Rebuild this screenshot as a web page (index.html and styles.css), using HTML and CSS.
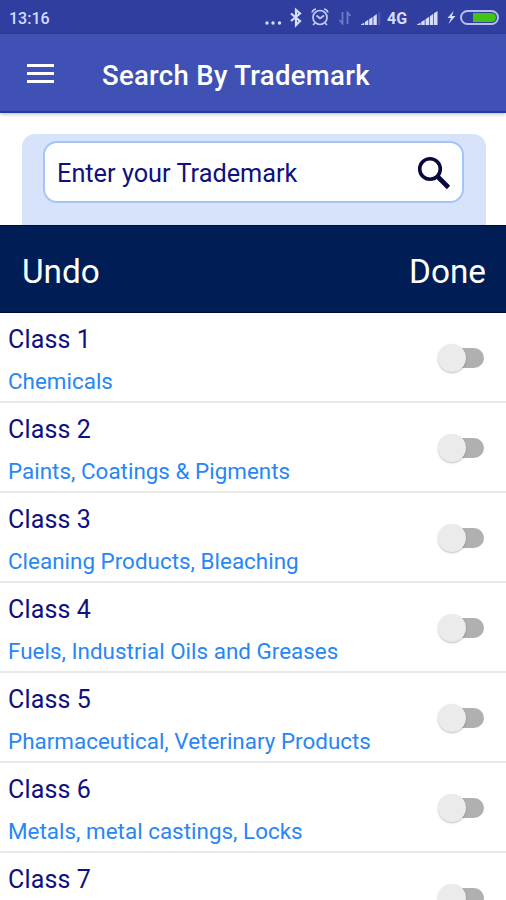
FILE: index.html
```
<!DOCTYPE html>
<html lang="en">
<head>
<meta charset="utf-8">
<title>Search By Trademark</title>
<link rel="stylesheet" href="styles.css">
</head>
<body>
<div class="screen">
  <div class="status">
    <span class="time">13:16</span>
    <svg class="indicators" width="236" height="34" viewBox="265 0 236 34" fill="none">
      <g fill="#d5dcff"><circle cx="267" cy="23" r="1.7"/><circle cx="273" cy="23" r="1.7"/><circle cx="279.500" cy="23" r="1.700"/></g>
      <path d="M291 13.500l9 7.500-4 4V10l4 3.500-9 7.500" stroke="#d5dcff" stroke-width="2.200"/>
      <g stroke="#c3cbf5" stroke-width="1.700"><circle cx="320" cy="17.500" r="7"/><path d="M316.500 15.500l3.500 3 4-3M312 12.500q1-3 4-3.500M328 12.500q-1-3-4-3.500M315 23l-2 2M325 23l2 2"/></g>
      <path d="M342.500 12v11.500l-3-3.500M347.500 24V12.500l3 3.500" stroke="#6f7ccc" stroke-width="1.700"/>
      <g fill="#d5dcff"><path d="M360.500 25l3.700-2.500V25zM365 22l3.300-2.200V25H365zM369.200 19.300l3.300-2.300v8h-3.300zM373.400 16.500l3.400-2.500v11h-3.400z"/><path d="M378 13l2.500-1.500V25H378z" fill="#4656b3"/>
      <path d="M416.500 25l4-2.500V25zM421.200 22l3.500-2.300V25h-3.500zM425.500 19.200l3.500-2.400V25h-3.500zM429.800 16.400l3.500-2.600V25h-3.500zM434 13.300l3.500-2.300v14H434z"/>
      <path d="M453.500 11l-6 7h3.500l-2.500 6 7-8h-3.500z"/></g>
      <rect x="461" y="11" width="37" height="13" rx="6.500" stroke="#b5c0ef" stroke-width="2"/>
      <path d="M473 13h18.500a4.500 4.500 0 0 1 0 9H473z" fill="#43c314"/>
      <text class="network" x="387" y="24">4G</text>
    </svg>
  </div>
  <header class="appbar">
    <svg class="menu" width="27" height="20" viewBox="0 0 27 20"><path d="M0 0h27v3H0zM0 8h27v3H0zM0 16h27v3H0z" fill="#fff"/></svg>
    <h1 class="title">Search By Trademark</h1>
  </header>
  <div class="search-area">
    <div class="panel">
      <div class="field">
        <span class="placeholder">Enter your Trademark</span>
        <svg class="glass" width="34" height="34" viewBox="0 0 34 34" fill="none" stroke="#08083f"><circle cx="13" cy="13" r="10.300" stroke-width="3.600"/><path d="M20.500 20.500l11 11" stroke-width="4.600"/></svg>
      </div>
    </div>
  </div>
  <div class="actions"><span class="undo">Undo</span><span class="done">Done</span></div>
  <ul class="list">
    <li class="row"><div><div class="name">Class 1</div><div class="desc">Chemicals</div></div><span class="switch"></span></li>
    <li class="row"><div><div class="name">Class 2</div><div class="desc">Paints, Coatings &amp; Pigments</div></div><span class="switch"></span></li>
    <li class="row"><div><div class="name">Class 3</div><div class="desc">Cleaning Products, Bleaching</div></div><span class="switch"></span></li>
    <li class="row"><div><div class="name">Class 4</div><div class="desc">Fuels, Industrial Oils and Greases</div></div><span class="switch"></span></li>
    <li class="row"><div><div class="name">Class 5</div><div class="desc">Pharmaceutical, Veterinary Products</div></div><span class="switch"></span></li>
    <li class="row"><div><div class="name">Class 6</div><div class="desc">Metals, metal castings, Locks</div></div><span class="switch"></span></li>
    <li class="row"><div><div class="name">Class 7</div></div><span class="switch"></span></li>
  </ul>
</div>
</body>
</html>
```
FILE: styles.css
```
* { box-sizing: border-box; }
body { margin: 0; background: #fff; font-family: Roboto, "Liberation Sans", sans-serif; }
.screen { width: 506px; height: 900px; overflow: hidden; display: flex; flex-direction: column; }
.screen > * { flex-shrink: 0; }
.status { height: 34px; background: #303f9f; display: flex; justify-content: space-between; align-items: center; padding: 2px 5px 0 9px; }
.indicators { margin-top: -2px; }
.time { color: #d5dcff; font-size: 16px; font-weight: 500; }
.network { fill: #d5dcff; font-size: 16px; font-weight: 700; }
.appbar { height: 79px; background: #3f51b5; display: flex; align-items: center; padding-left: 27px; gap: 48px; border-bottom: 2px solid #2139a5; box-shadow: 0 1px 4px rgba(0,0,0,.3); }
.menu { margin-top: 3px; }
.title { margin: 6px 0 0; color: #fff; font-size: 27.5px; font-weight: 500; line-height: 32px; letter-spacing: .3px; }
.search-area { height: 112px; padding: 21px 20px 0 22px; }
.panel { height: 91px; background: #d6e3fb; border-radius: 13px 13px 0 0; padding: 7px 22px 0 21px; }
.field { height: 62px; background: #fff; border: 2px solid #a4c5f5; border-radius: 14px; display: flex; align-items: center; justify-content: space-between; padding: 0 11px 0 12px; }
.placeholder { color: #10107e; font-size: 25.3px; padding-top: 3px; }
.glass { margin-top: 2px; }
.actions { height: 88px; background: #001d55; border-top: 1px solid #00093a; border-bottom: 1px solid #00093a; display: flex; align-items: center; justify-content: space-between; padding: 4px 20px 0 22px; color: #fff; font-size: 33.3px; }
.list { list-style: none; margin: 0; padding: 0; }
.row { height: 90px; border-bottom: 2px solid #e9e9e9; display: flex; justify-content: space-between; align-items: flex-start; padding: 12px 22px 0 8px; }
.name { color: #10107e; font-size: 25px; line-height: 30px; letter-spacing: .15px; }
.desc { color: #2886f5; font-size: 22.4px; line-height: 28px; margin-top: 12px; letter-spacing: .02px; }
.switch { position: relative; width: 46px; height: 28px; margin-top: 19px; }
.switch::before { content: ""; position: absolute; left: 12px; right: 0; top: 4px; height: 20px; border-radius: 10px; background: #b0b0b0; }
.switch::after { content: ""; position: absolute; left: 0; top: 0; width: 28px; height: 28px; border-radius: 50%; background: #ebebeb; box-shadow: 0 1px 2px rgba(0,0,0,.25); }
```
